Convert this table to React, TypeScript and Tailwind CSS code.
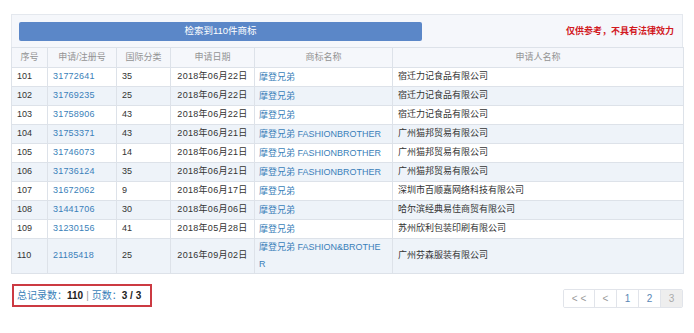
import React from 'react';

type Row = {
  no: string;
  reg: string;
  cls: string;
  date: string;
  mark: React.ReactNode;
  owner: string;
};

const rows: Row[] = [
  { no: '101', reg: '31772641', cls: '35', date: '2018年06月22日', mark: '摩登兄弟', owner: '宿迁力记食品有限公司' },
  { no: '102', reg: '31769235', cls: '25', date: '2018年06月22日', mark: '摩登兄弟', owner: '宿迁力记食品有限公司' },
  { no: '103', reg: '31758906', cls: '43', date: '2018年06月22日', mark: '摩登兄弟', owner: '宿迁力记食品有限公司' },
  { no: '104', reg: '31753371', cls: '43', date: '2018年06月21日', mark: '摩登兄弟 FASHIONBROTHER', owner: '广州猫邦贸易有限公司' },
  { no: '105', reg: '31746073', cls: '14', date: '2018年06月21日', mark: '摩登兄弟 FASHIONBROTHER', owner: '广州猫邦贸易有限公司' },
  { no: '106', reg: '31736124', cls: '35', date: '2018年06月21日', mark: '摩登兄弟 FASHIONBROTHER', owner: '广州猫邦贸易有限公司' },
  { no: '107', reg: '31672062', cls: '9', date: '2018年06月17日', mark: '摩登兄弟', owner: '深圳市百顺嘉网络科技有限公司' },
  { no: '108', reg: '31441706', cls: '30', date: '2018年06月06日', mark: '摩登兄弟', owner: '哈尔滨经典易佳商贸有限公司' },
  { no: '109', reg: '31230156', cls: '41', date: '2018年05月28日', mark: '摩登兄弟', owner: '苏州欣利包装印刷有限公司' },
  {
    no: '110',
    reg: '21185418',
    cls: '25',
    date: '2016年09月02日',
    mark: (
      <>
        摩登兄弟 FASHION&amp;BROTHE
        <br />R
      </>
    ),
    owner: '广州芬森服装有限公司',
  },
];

const pages = ['<<', '<', '1', '2', '3'];

export default function App() {
  return (
    <div
      className="w-[694px] h-[333px] bg-white overflow-hidden text-[9px] text-[#333]"
      style={{ fontFamily: '"Liberation Sans", "Noto Sans CJK SC", sans-serif' }}
    >
      {/* Result panel */}
      <div className="ml-[11px] mt-[14px] w-[672px] bg-[#f5f7fb] border-t border-l border-r border-[#e4e8ee]">
        <div className="h-[32px] flex items-start justify-between pl-[7px] pr-[8px] pt-[7px]">
          <div className="w-[403px] h-[19px] rounded-[2px] bg-[#5b87c8] text-white text-[9.5px] flex items-center justify-center">
            检索到110件商标
          </div>
          <div className="h-[19px] flex items-center font-bold text-[#d2191f]">仅供参考，不具有法律效力</div>
        </div>

        <table className="w-[672px] table-fixed border-collapse -ml-px">
          <colgroup>
            <col className="w-[36px]" />
            <col className="w-[69px]" />
            <col className="w-[54px]" />
            <col className="w-[84px]" />
            <col className="w-[138px]" />
            <col className="w-[291px]" />
          </colgroup>
          <thead>
            <tr className="h-[20px] text-[#939393] bg-[#f5f7fb]">
              {['序号', '申请/注册号', '国际分类', '申请日期', '商标名称', '申请人名称'].map(h => (
                <th key={h} className="border border-[#dde2e9] font-normal text-center p-0">
                  {h}
                </th>
              ))}
            </tr>
          </thead>
          <tbody>
            {rows.map((r, i) => (
              <tr
                key={r.no}
                className={`${r.no === '110' ? 'h-[35px]' : 'h-[19px]'} ${i % 2 === 1 ? 'bg-[#eef3f9]' : 'bg-white'}`}
              >
                <td className="border border-[#dde2e9] pl-[5px] pr-0 py-0">{r.no}</td>
                <td className="border border-[#dde2e9] pl-[5px] pr-0 py-0 text-[#3a7fb9] tracking-[0.2px]">{r.reg}</td>
                <td className="border border-[#dde2e9] pl-[5px] pr-0 py-0">{r.cls}</td>
                <td className="border border-[#dde2e9] px-0 py-0 text-center whitespace-nowrap tracking-[0.3px]">{r.date}</td>
                <td className="border border-[#dde2e9] px-[4px] py-0 text-[#3a7fb9] whitespace-nowrap leading-[17px]">
                  {r.mark}
                </td>
                <td className="border border-[#dde2e9] px-[5px] py-0">{r.owner}</td>
              </tr>
            ))}
          </tbody>
        </table>
      </div>

      {/* Footer: totals and pager */}
      <div className="flex items-start justify-between ml-[12px] mr-[11px] mt-[10px]">
        <div className="w-[140px] h-[23px] border-2 border-[#cc3a42] flex items-center pl-[3px] text-[10px] whitespace-nowrap">
          <span className="text-[#3a7fb9]">总记录数：</span>
          <span className="font-bold text-[#222]">110</span>
          <span className="text-[#999] mx-[3px]">|</span>
          <span className="text-[#3a7fb9]">页数：</span>
          <span className="font-bold text-[#222]">3 / 3</span>
        </div>

        <div className="flex mt-[5px] h-[19px] border border-[#e1e4ea] rounded-[2px] overflow-hidden">
          {pages.map((p, i) => (
            <div
              key={p}
              className={`flex items-center justify-center text-[10px] ${i > 0 ? 'border-l border-[#e1e4ea]' : ''} ${
                i === 0 ? 'w-[30px]' : 'w-[22px]'
              } ${
                p === '3'
                  ? 'bg-[#eeeeee] text-[#aaa]'
                  : p === '1' || p === '2'
                  ? 'bg-white text-[#5a88b5]'
                  : 'bg-white text-[#999]'
              }`}
            >
              {p === '<<' ? '< <' : p}
            </div>
          ))}
        </div>
      </div>
    </div>
  );
}
